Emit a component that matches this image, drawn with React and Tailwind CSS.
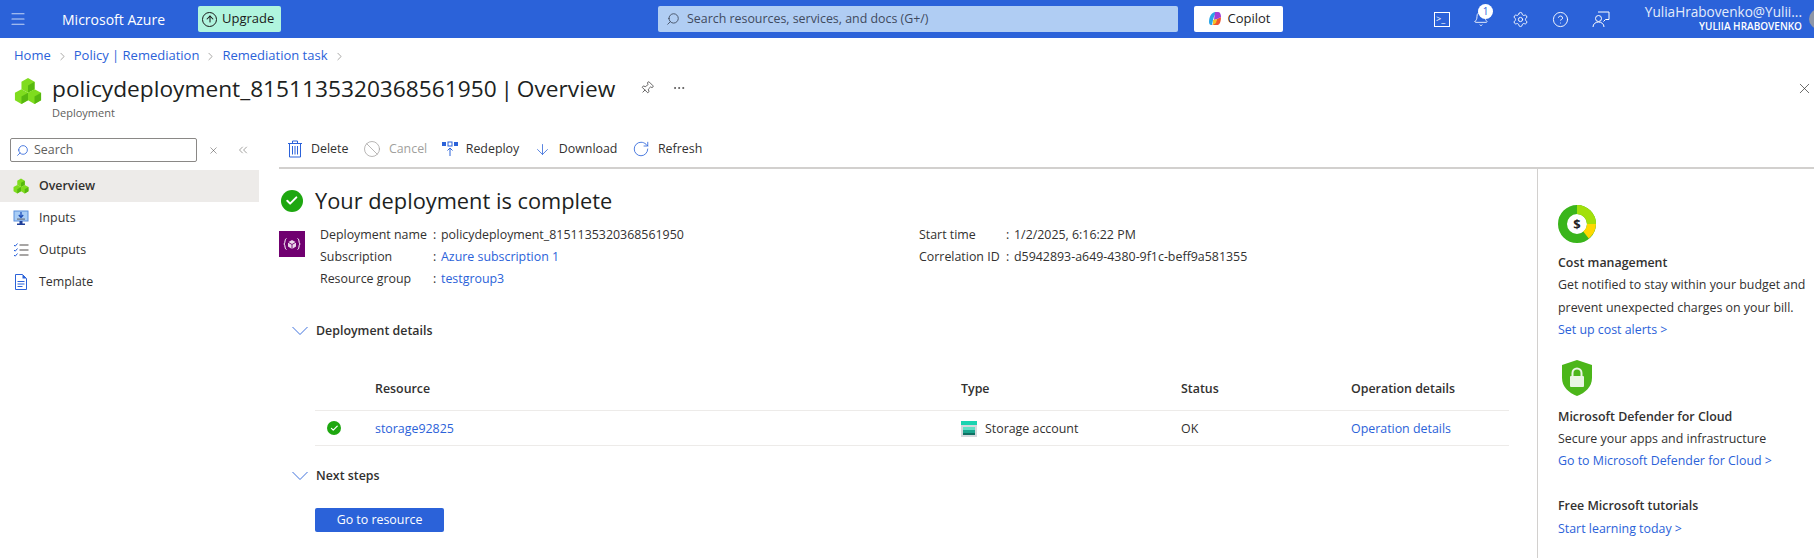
import { ChevronRight, Menu, Search, X, ChevronsLeft, Pin, Ban, ArrowDown, RotateCw, Settings, HelpCircle, Bell, ArrowUp, Check, MoreHorizontal } from 'lucide-react'

const Cubes = ({ size = 30 }) => (
    <svg width={size} height={size} viewBox="0 0 30 30" className="shrink-0">
        <path d="M15 1l7 4v8l-7 4-7-4V5z" fill="#7fdc1e" />
        <path d="M15 9l7-4v8l-7 4z" fill="#57b80f" />
        <path d="M8 13l7 4v8l-7 4-7-4v-8z" fill="#7fdc1e" />
        <path d="M8 21l7-4v8l-7 4z" fill="#57b80f" />
        <path d="M22 13l7 4v8l-7 4-7-4v-8z" fill="#7fdc1e" />
        <path d="M22 21l7-4v8l-7 4z" fill="#57b80f" />
    </svg>
)

const CheckCircle = ({ size = 22 }) => (
    <span className="flex items-center justify-center rounded-full bg-[#1ea710] shrink-0" style={{ width: size, height: size }}>
        <Check size={size * 0.62} color="white" strokeWidth={3.5} />
    </span>
)

const Copilot = () => (
    <svg width="16" height="16" viewBox="0 0 16 16" className="shrink-0">
        <path d="M2 11C2 6 4 2 8 1h3c-3 1-4 4-5 8l-1 5H4c-1 0-2-1-2-3z" fill="#2aa6e8" />
        <path d="M5 14h6c2-1 3-4 3-8l-4 2-2 4z" fill="#f0562f" />
        <path d="M8 1h3c2 0 3 2 3 5l-4 2-3 1z" fill="#a23fd6" />
        <path d="M6 9l4-1-1 4-3 2z" fill="#f5c22a" />
    </svg>
)

const Chevron = () => (
    <svg width="16" height="10" viewBox="0 0 16 10" fill="none" stroke="#2b62d9" strokeWidth="0.9" className="shrink-0">
        <path d="M0.5 1L8 8.5L15.5 1" />
    </svg>
)

const InputsIcon = () => (
    <svg width="16" height="16" viewBox="0 0 16 16" className="shrink-0">
        <rect x="1" y="1" width="14" height="10" fill="#a9cdf5" stroke="#5b8fdc" strokeWidth="1" />
        <path d="M8 2v5M5.8 5L8 7.5 10.2 5" fill="none" stroke="#1f4fb8" strokeWidth="1.3" />
        <rect x="4" y="8.5" width="8" height="1.2" fill="#6b7280" />
        <path d="M6.5 11h3v2.5H12V15H4v-1.5h2.5z" fill="#1f3f99" />
    </svg>
)

const OutputsIcon = () => (
    <svg width="16" height="16" viewBox="0 0 16 16" fill="none" className="shrink-0">
        <path d="M1 3l1.2 1.2L4.5 1.5M1 8l1.2 1.2 2.3-2.7M1 13l1.2 1.2 2.3-2.7" stroke="#2b62d9" strokeWidth="1" />
        <path d="M6.5 3h9M6.5 8h9M6.5 13h9" stroke="#8a8886" strokeWidth="1.3" />
    </svg>
)

const TemplateIcon = () => (
    <svg width="16" height="16" viewBox="0 0 16 16" fill="none" className="shrink-0">
        <path d="M2.5 0.5h7l4 4v11h-11z" fill="#fff" stroke="#2b62d9" />
        <path d="M9.5 0.5v4h4z" fill="#2b62d9" />
        <path d="M4.5 7.5h7M4.5 10h7M4.5 12.5h5" stroke="#2b62d9" />
    </svg>
)

const TrashIcon = () => (
    <svg width="16" height="18" viewBox="0 0 16 18" fill="none" stroke="#2b62d9" strokeWidth="1" className="shrink-0">
        <path d="M1 3.5h14M5.5 3.5v-2.5h5v2.5M2.5 3.5v13.5h11V3.5M5.5 6v8.5M8 6v8.5M10.5 6v8.5" />
    </svg>
)

const RedeployIcon = () => (
    <svg width="16" height="16" viewBox="0 0 16 16" className="shrink-0">
        <rect x="0" y="1" width="4" height="4" fill="#2b62d9" />
        <rect x="6" y="1" width="4" height="4" fill="none" stroke="#2b62d9" />
        <rect x="12" y="1" width="4" height="4" fill="#2b62d9" />
        <path d="M8 15V7.5M5.5 9.5L8 7l2.5 2.5" fill="none" stroke="#2b62d9" />
    </svg>
)

const DeployIcon = () => (
    <svg width="18" height="18" viewBox="0 0 18 18" fill="none" stroke="white">
        <path d="M9 5l4 2.2v4.4L9 14l-4-2.4V7.2z" fill="white" fillOpacity="0.85" stroke="none" />
        <path d="M5 7.2L9 9.5l4-2.3M9 9.5V14" stroke="#700070" strokeWidth="0.9" />
        <path d="M3.5 3.5C1.5 3.5 2.5 8 1 9c1.500 1 .5 5.500 2.500 5.500M14.500 3.500c2 0 1 4.500 2.500 5.500-1.500 1-.5 5.500-2.500 5.500" strokeWidth="1" />
    </svg>
)

const StorageIcon = () => (
    <svg width="16" height="16" viewBox="0 0 16 16" className="shrink-0">
        <rect x="0" y="0" width="16" height="16" fill="#d4d8dc" />
        <rect x="0" y="0" width="16" height="4" fill="#19d3b0" />
        <rect x="2" y="6" width="12" height="3" fill="#5fe0c6" />
        <rect x="2" y="9" width="12" height="3" fill="#1aa58e" />
        <rect x="2" y="12" width="12" height="2" fill="#0f6f62" />
    </svg>
)

const FeedbackIcon = () => (
    <svg width="18" height="18" viewBox="0 0 18 18" fill="none" stroke="white" strokeWidth="1" className="shrink-0">
        <circle cx="6.500" cy="8.500" r="3" />
        <path d="M1 17c0-3 2.500-5 5.500-5s5.500 2 5.500 5M6 2h11v7.500h-3.500l-2 2" />
    </svg>
)

const InfoRow = ({ label, value, link, w }) => (
    <div className="flex h-[22px] items-center whitespace-nowrap">
        <span className={w}>{label}</span>
        <span className="w-[8px]">:</span>
        {link ? <span className="text-[#2b62d9]">{value}</span> : <span>{value}</span>}
    </div>
)

const ToolButton = ({ icon, label, muted }) => (
    <div className={`flex items-center gap-[8px] ${muted ? 'text-[#a19f9d]' : 'text-[#323130]'}`}>
        {icon}
        <span>{label}</span>
    </div>
)

const NavItem = ({ icon, label, active }) => (
    <div className={`flex h-[32px] items-center gap-[10px] pl-[13px] ${active ? 'bg-[#edebe9] font-semibold' : ''}`}>
        {icon}
        <span>{label}</span>
    </div>
)

const App = () => {
    return (
        <div className="w-[1814px] h-[558px] overflow-hidden bg-white text-[#323130] text-[12.4px] flex flex-col" style={{ fontFamily: '"Open Sans", sans-serif' }}>
            {/* top bar */}
            <header className="h-[38px] shrink-0 bg-[#2b62d9] text-white flex items-center">
                <Menu size={18} strokeWidth={1.5} className="ml-[9px] shrink-0 text-[#c5d5f5]" />
                <span className="ml-[35px] text-[14px] font-medium w-[106px] shrink-0 whitespace-nowrap">Microsoft Azure</span>
                <div className="ml-[30px] flex items-center gap-[5px] h-[26px] w-[83px] shrink-0 pl-[4px] rounded-[2px] bg-[#b0f5de] text-[#1b1a19] text-[13px]">
                    <span className="w-[15px] h-[15px] rounded-full border border-[#1b1a19] flex items-center justify-center"><ArrowUp size={10} strokeWidth={2.5} /></span>
                    Upgrade
                </div>
                <div className="ml-[377px] flex items-center w-[520px] shrink-0 h-[26px] rounded-[2px] bg-[#b0cdf3] text-[#3f4a5e] pl-[8px] gap-[7px]">
                    <Search size={14} strokeWidth={1.5} className="-scale-x-100" />
                    <span>Search resources, services, and docs (G+/)</span>
                </div>
                <div className="ml-[16px] w-[89px] shrink-0 h-[26px] rounded-[2px] bg-white text-[#242424] text-[13px] font-medium flex items-center justify-center gap-[5px]">
                    <Copilot />
                    Copilot
                </div>
                <div className="ml-[151px] flex items-center gap-[23px] shrink-0">
                    <span className="w-[16px] h-[15px] border border-white flex items-start pl-[1px] text-[9px] leading-[12px]">&gt;_</span>
                    <span className="relative">
                        <Bell size={16} strokeWidth={1.3} />
                        <span className="absolute -top-[7px] left-[5px] w-[15px] h-[15px] rounded-full bg-white text-[#2b62d9] text-[10px] flex items-center justify-center">1</span>
                    </span>
                    <Settings size={17} strokeWidth={1.3} />
                    <HelpCircle size={17} strokeWidth={1.3} />
                    <FeedbackIcon />
                </div>
                <div className="ml-[17px] w-[175px] text-right leading-[15px] shrink-0">
                    <div className="text-[13.6px] whitespace-nowrap text-[#e4ecfb]">YuliaHrabovenko@Yulii...</div>
                    <div className="text-[10px] font-semibold whitespace-nowrap">YULIIA HRABOVENKO</div>
                </div>
                <div className="ml-[7px] w-[20px] h-[20px] rounded-full bg-[#8d96a8] shrink-0" />
            </header>

            {/* breadcrumb */}
            <div className="h-[36px] flex items-center pl-[14px] gap-[5px] text-[#2b62d9] text-[13px] shrink-0">
                <span>Home</span><ChevronRight size={13} strokeWidth={1} className="text-[#605e5c]" />
                <span>Policy | Remediation</span><ChevronRight size={13} strokeWidth={1} className="text-[#605e5c]" />
                <span>Remediation task</span><ChevronRight size={13} strokeWidth={1} className="text-[#605e5c]" />
            </div>

            {/* title */}
            <div className="h-[53px] flex items-start pl-[14px] shrink-0">
                <div className="mt-[3px]"><Cubes size={28} /></div>
                <div className="ml-[10px] -mt-[1px]">
                    <div className="text-[22.7px] leading-[32px] whitespace-nowrap text-[#201f1e] [word-spacing:-2px]"><span className="font-medium">policydeployment_8151135320368561950</span> | Overview</div>
                    <div className="text-[11px] text-[#605e5c] leading-[14px] mt-[1px]">Deployment</div>
                </div>
                <Pin size={14} strokeWidth={1.2} className="ml-[25px] mt-[7px] rotate-45" />
                <MoreHorizontal size={14} strokeWidth={1.2} className="ml-[18px] mt-[7px]" />
                <X size={17} strokeWidth={1} className="ml-auto mr-[1px] mt-[6px]" />
            </div>

            <div className="flex flex-1 min-h-0">
                {/* sidebar */}
                <aside className="w-[259px] shrink-0 pt-[11px]">
                    <div className="flex items-center pl-[10px]">
                        <div className="w-[187px] h-[24px] border border-[#8a8886] rounded-[2px] flex items-center pl-[5px] gap-[5px] text-[#605e5c]">
                            <Search size={13} strokeWidth={1.5} className="-scale-x-100 text-[#2b62d9]" />
                            Search
                        </div>
                        <X size={11} strokeWidth={1} className="ml-[11px]" />
                        <ChevronsLeft size={14} strokeWidth={1} className="ml-[17px] text-[#605e5c]" />
                    </div>
                    <div className="mt-[8px]">
                        <NavItem active icon={<Cubes size={16} />} label="Overview" />
                        <NavItem icon={<InputsIcon />} label="Inputs" />
                        <NavItem icon={<OutputsIcon />} label="Outputs" />
                        <NavItem icon={<TemplateIcon />} label="Template" />
                    </div>
                </aside>

                {/* main */}
                <main className="flex-1 min-w-0 flex flex-col pl-[20px]">
                    <div className="h-[42px] flex items-center gap-[14.5px] border-b-2 border-[#d2d0ce] shrink-0 pl-[8px] pt-[5px]">
                        <ToolButton icon={<TrashIcon />} label="Delete" />
                        <ToolButton muted icon={<Ban size={18} strokeWidth={1} />} label="Cancel" />
                        <ToolButton icon={<RedeployIcon />} label="Redeploy" />
                        <ToolButton icon={<ArrowDown size={17} strokeWidth={1.1} className="text-[#2b62d9]" />} label="Download" />
                        <ToolButton icon={<RotateCw size={18} strokeWidth={1.1} className="text-[#2b62d9]" />} label="Refresh" />
                    </div>
                    <div className="flex flex-1 min-h-0">
                        <div className="flex-1 min-w-0 pt-[17px]">
                            <div className="flex items-center gap-[12px] pl-[2px]">
                                <CheckCircle />
                                <span className="text-[21.8px] leading-[30px] text-[#201f1e]">Your deployment is complete</span>
                            </div>
                            <div className="flex mt-[8px]">
                                <div className="w-[26px] h-[26px] bg-[#700070] flex items-center justify-center mt-[7px]"><DeployIcon /></div>
                                <div className="ml-[15px] w-[599px]">
                                    <InfoRow w="w-[113px]" label="Deployment name" value="policydeployment_8151135320368561950" />
                                    <InfoRow w="w-[113px]" label="Subscription" value="Azure subscription 1" link />
                                    <InfoRow w="w-[113px]" label="Resource group" value="testgroup3" link />
                                </div>
                                <div>
                                    <InfoRow w="w-[87px]" label="Start time" value="1/2/2025, 6:16:22 PM" />
                                    <InfoRow w="w-[87px]" label="Correlation ID" value="d5942893-a649-4380-9f1c-beff9a581355" />
                                </div>
                            </div>
                            <div className="flex items-center gap-[8px] mt-[31px] pl-[13px] h-[20px] font-semibold">
                                <Chevron />
                                Deployment details
                            </div>
                            <div className="ml-[36px] mr-[28px] mt-[31px]">
                                <div className="grid grid-cols-[60px_586px_220px_170px_1fr] h-[39px] items-center font-semibold border-b border-[#edebe9] pb-[4px]">
                                    <span />
                                    <span>Resource</span><span>Type</span><span>Status</span><span>Operation details</span>
                                </div>
                                <div className="grid grid-cols-[60px_586px_220px_170px_1fr] h-[35px] items-center border-b border-[#edebe9] pt-[2px]">
                                    <span className="pl-[12px] -mt-[2px]"><CheckCircle size={14} /></span>
                                    <span className="text-[#2b62d9]">storage92825</span>
                                    <span className="flex items-center gap-[8px]">
                                        <StorageIcon />
                                        Storage account
                                    </span>
                                    <span>OK</span>
                                    <span className="text-[#2b62d9]">Operation details</span>
                                </div>
                            </div>
                            <div className="flex items-center gap-[8px] mt-[20px] pl-[13px] h-[20px] font-semibold">
                                <Chevron />
                                Next steps
                            </div>
                            <div className="ml-[36px] mt-[22px] w-[129px] h-[24px] bg-[#2b62d9] text-white rounded-[2px] flex items-center justify-center">Go to resource</div>
                        </div>

                        {/* right panel */}
                        <aside className="w-[277px] shrink-0 border-l border-[#d2d0ce] pl-[20px] pt-[37px] leading-[22.4px] -mt-[1px]">
                            <svg width="38" height="38" viewBox="0 0 38 38" className="block">
                                <circle cx="19" cy="19" r="14.5" fill="#fff" stroke="#3ab51b" strokeWidth="9" />
                                <path d="M19 4.5A14.5 14.5 0 0 1 33.5 19" fill="none" stroke="#a2e00b" strokeWidth="9" />
                                <path d="M33.5 19A14.5 14.5 0 0 1 28 30" fill="none" stroke="#ffd800" strokeWidth="9" />
                                <text x="19" y="24" textAnchor="middle" fontSize="13" fontWeight="700" fill="#222">$</text>
                            </svg>
                            <div className="font-semibold mt-[9px]">Cost management</div>
                            <div className="whitespace-nowrap">Get notified to stay within your budget and</div>
                            <div className="whitespace-nowrap">prevent unexpected charges on your bill.</div>
                            <div className="text-[#2b62d9]">Set up cost alerts &gt;</div>
                            <svg width="38" height="38" viewBox="0 0 38 38" className="block mt-[17px]">
                                <path d="M19 1l15 5v13c0 9-7 15-15 18C11 34 4 28 4 19V6z" fill="#4cb61a" />
                                <rect x="12" y="17" width="14" height="11" rx="1" fill="#e9f5e2" />
                                <path d="M14.5 17v-3a4.5 4.5 0 0 1 9 0v3" fill="none" stroke="#e9f5e2" strokeWidth="2" />
                            </svg>
                            <div className="font-semibold mt-[9px]">Microsoft Defender for Cloud</div>
                            <div>Secure your apps and infrastructure</div>
                            <div className="text-[#2b62d9] whitespace-nowrap">Go to Microsoft Defender for Cloud &gt;</div>
                            <div className="font-semibold mt-[22.5px]">Free Microsoft tutorials</div>
                            <div className="text-[#2b62d9]">Start learning today &gt;</div>
                        </aside>
                    </div>
                </main>
            </div>
        </div>
    )
}

export default App
